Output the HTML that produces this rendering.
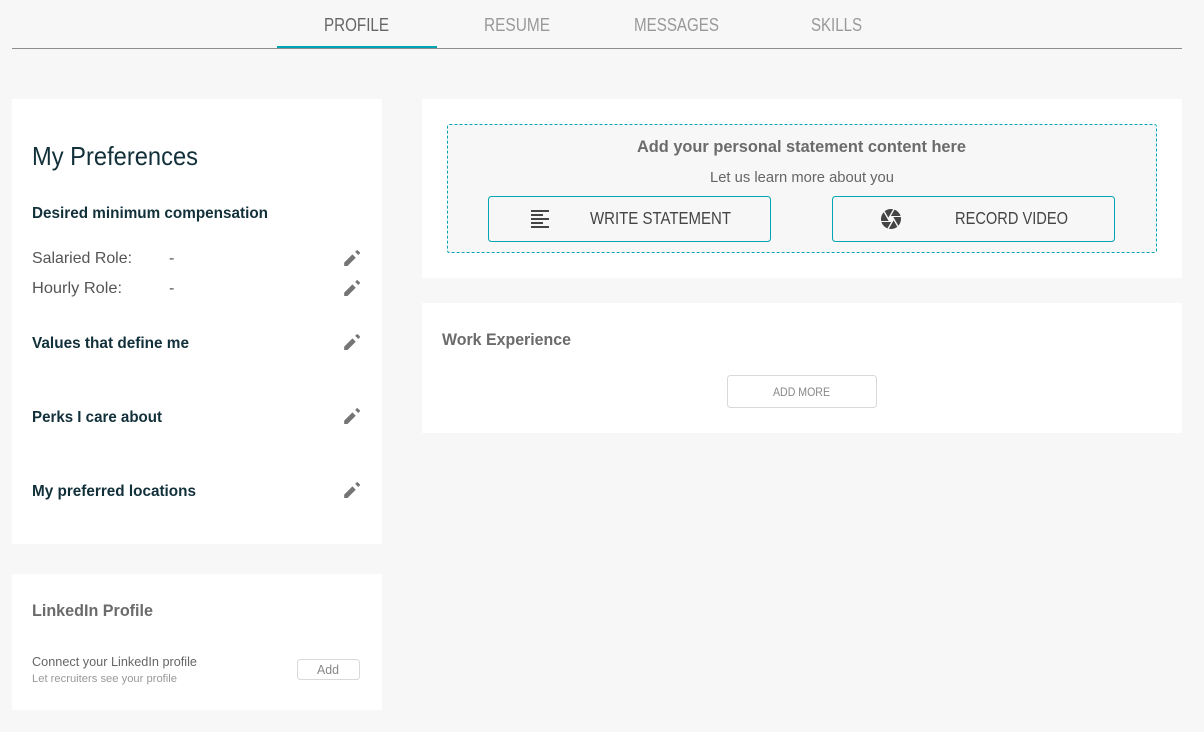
<!DOCTYPE html>
<html><head><meta charset="utf-8"><title>Profile</title>
<style>
html,body{margin:0;padding:0;width:1204px;height:732px;background:#f7f7f7;overflow:hidden}
svg{display:block}
text{font-family:"Liberation Sans",sans-serif;font-size:15px;fill:#555}
.tab{font-size:18.5px;fill:#999}
.d{fill:#12303a;font-weight:bold;font-size:15.5px}
.h{fill:#6b6b6b;font-weight:bold;font-size:16.5px}
.r{fill:#555;font-size:16px}
</style></head><body>
<svg width="1204" height="732" viewBox="0 0 1204 732" xmlns="http://www.w3.org/2000/svg">
<defs>
<path id="pen" d="M3 17.25V21h3.75L16 11.75 12.25 8 3 17.25zM20.5 7a1 1 0 0 0 0-1.41l-2.1-2.1a1 1 0 0 0-1.41 0l-1.6 1.6 3.5 3.5 1.6-1.6z" fill="#757575"/>
</defs>
<rect width="1204" height="732" fill="#f7f7f7"/>
<!-- tabs -->
<rect x="12" y="48" width="1170" height="1" fill="#8c8c8c"/>
<rect x="277" y="46" width="160" height="2" fill="#00a4b4"/>
<text class="tab" x="324" y="31" textLength="65" lengthAdjust="spacingAndGlyphs" style="fill:#666">PROFILE</text>
<text class="tab" x="484" y="31" textLength="66" lengthAdjust="spacingAndGlyphs">RESUME</text>
<text class="tab" x="634" y="31" textLength="85" lengthAdjust="spacingAndGlyphs">MESSAGES</text>
<text class="tab" x="811" y="31" textLength="51" lengthAdjust="spacingAndGlyphs">SKILLS</text>
<!-- cards -->
<rect x="12" y="99" width="370" height="445" fill="#fff"/>
<rect x="12" y="574" width="370" height="136" fill="#fff"/>
<rect x="422" y="99" width="760" height="179" fill="#fff"/>
<rect x="422" y="303" width="760" height="130" fill="#fff"/>
<!-- preferences -->
<text x="32" y="165" textLength="166" lengthAdjust="spacingAndGlyphs" style="font-size:26px;fill:#12303a">My Preferences</text>
<text class="d" x="32" y="218" textLength="236" lengthAdjust="spacingAndGlyphs">Desired minimum compensation</text>
<text class="r" x="32" y="263" textLength="100" lengthAdjust="spacingAndGlyphs">Salaried Role:</text>
<text class="r" x="169" y="263">-</text>
<text class="r" x="32" y="293" textLength="90" lengthAdjust="spacingAndGlyphs">Hourly Role:</text>
<text class="r" x="169" y="293">-</text>
<text class="d" x="32" y="348" textLength="157" lengthAdjust="spacingAndGlyphs">Values that define me</text>
<text class="d" x="32" y="422" textLength="130" lengthAdjust="spacingAndGlyphs">Perks I care about</text>
<text class="d" x="32" y="496" textLength="164" lengthAdjust="spacingAndGlyphs">My preferred locations</text>
<use href="#pen" transform="translate(341.5 247.3) scale(.89)"/>
<use href="#pen" transform="translate(341.5 277.3) scale(.89)"/>
<use href="#pen" transform="translate(341.5 331.3) scale(.89)"/>
<use href="#pen" transform="translate(341.5 405.3) scale(.89)"/>
<use href="#pen" transform="translate(341.5 479.3) scale(.89)"/>
<!-- linkedin -->
<text class="h" x="32" y="616" textLength="121" lengthAdjust="spacingAndGlyphs">LinkedIn Profile</text>
<text x="32" y="666" textLength="165" lengthAdjust="spacingAndGlyphs" style="font-size:12.5px;fill:#666">Connect your LinkedIn profile</text>
<text x="32" y="682" textLength="145" lengthAdjust="spacingAndGlyphs" style="font-size:11px;fill:#999">Let recruiters see your profile</text>
<rect x="297.5" y="659.5" width="62" height="20" rx="3" fill="#fff" stroke="#d9d9d9"/>
<text x="317" y="674" textLength="22" lengthAdjust="spacingAndGlyphs" style="font-size:13px;fill:#888">Add</text>
<!-- statement -->
<rect x="447.5" y="124.5" width="709" height="128" rx="2" fill="#f7f7f7" stroke="#00a4b4" stroke-dasharray="3 2"/>
<text class="h" x="637" y="152" textLength="329" lengthAdjust="spacingAndGlyphs">Add your personal statement content here</text>
<text x="710" y="182" textLength="184" lengthAdjust="spacingAndGlyphs" style="font-size:14.5px;fill:#666">Let us learn more about you</text>
<rect x="488.5" y="196.5" width="282" height="45" rx="3" fill="#f7f7f7" stroke="#00a4b4"/>
<rect x="832.5" y="196.5" width="282" height="45" rx="3" fill="#f7f7f7" stroke="#00a4b4"/>
<path transform="translate(528 207)" fill="#444" d="M15 15H3v2h12v-2zm0-8H3v2h12V7zM3 13h18v-2H3v2zm0 8h18v-2H3v2zM3 3v2h18V3H3z"/>
<path transform="translate(879 207)" fill="#444" d="M9.4 10.5l4.77-8.26C13.47 2.09 12.75 2 12 2c-2.4 0-4.6.85-6.32 2.25l3.66 6.35.06-.1zM21.54 9c-.92-2.92-3.15-5.26-6-6.34L11.88 9h9.66zm.26 1h-7.49l.29.5 4.76 8.25C21 16.97 22 14.61 22 12c0-.69-.07-1.35-.2-2zM8.54 12l-3.9-6.75C3.01 7.03 2 9.39 2 12c0 .69.07 1.35.2 2h7.49l-1.15-2zm-6.08 3c.92 2.92 3.15 5.26 6 6.34L12.12 15H2.46zm11.27 0l-3.9 6.76c.7.15 1.42.24 2.17.24 2.4 0 4.6-.85 6.32-2.25l-3.66-6.35-.93 1.6z"/>
<text x="590" y="224" textLength="141" lengthAdjust="spacingAndGlyphs" style="font-size:17.5px;fill:#444">WRITE STATEMENT</text>
<text x="955" y="224" textLength="113" lengthAdjust="spacingAndGlyphs" style="font-size:17.5px;fill:#444">RECORD VIDEO</text>
<!-- work -->
<text class="h" x="442" y="345" textLength="129" lengthAdjust="spacingAndGlyphs">Work Experience</text>
<rect x="727.5" y="375.5" width="149" height="32" rx="3" fill="#fff" stroke="#d9d9d9"/>
<text x="773" y="396" textLength="57" lengthAdjust="spacingAndGlyphs" style="font-size:11.5px;fill:#888">ADD MORE</text>
</svg>
</body></html>
